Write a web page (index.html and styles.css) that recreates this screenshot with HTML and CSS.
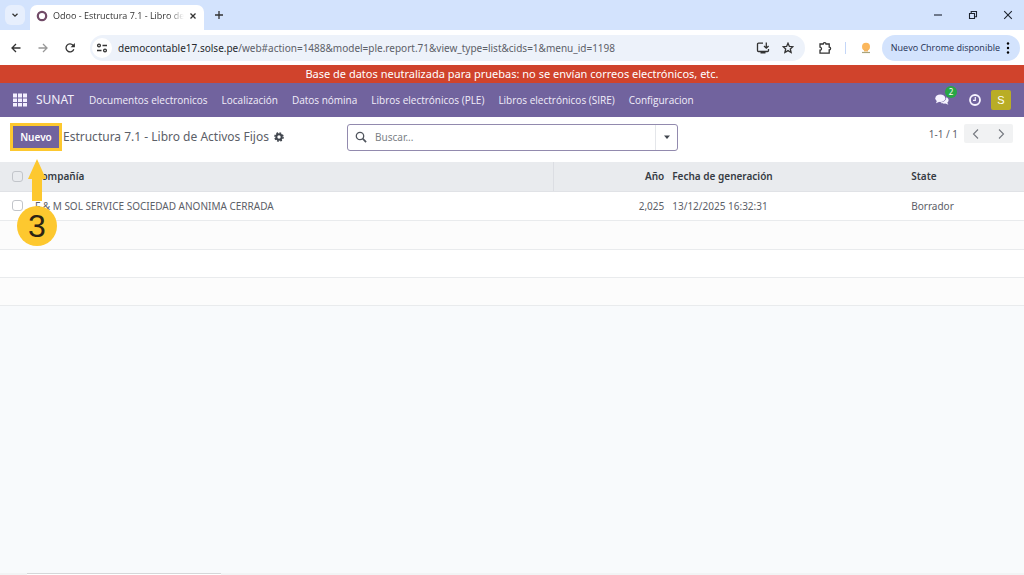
FILE: index.html
```html
<!DOCTYPE html>
<html lang="es">
<head>
<meta charset="utf-8">
<title>Odoo - Estructura 7.1 - Libro de Activos Fijos</title>
<link rel="stylesheet" href="styles.css">
</head>
<body>
<div class="tabstrip">
  <button class="tab-search" aria-label="Buscar pestañas"><svg width="8" height="8" viewBox="0 0 8 8"><path d="M1.5 2.7 4 5.2l2.5-2.5" class="line"/></svg></button>
  <div class="tab">
    <svg width="12" height="12" viewBox="0 0 12 12"><circle cx="6" cy="6" r="4.2" fill="none" stroke="#714b67" stroke-width="2.2"/></svg>
    <span class="tab-title">Odoo - Estructura 7.1 - Libro de</span>
    <button class="plain" aria-label="Cerrar pestaña"><svg width="8" height="8" viewBox="0 0 8 8"><path d="m1.5 1.5 5 5m0-5-5 5" class="line"/></svg></button>
  </div>
  <button class="plain new-tab" aria-label="Nueva pestaña"><svg width="10" height="10" viewBox="0 0 10 10"><path d="M5 1v8M1 5h8" class="line"/></svg></button>
  <div class="window-buttons">
    <button class="plain" aria-label="Minimizar"><svg width="10" height="10" viewBox="0 0 10 10"><path d="M1 5h8" class="thin"/></svg></button>
    <button class="plain" aria-label="Restaurar"><svg width="10" height="10" viewBox="0 0 10 10"><path d="M1.5 3.5h5v5h-5zM3.2 3.2V1.5h5.3v5.3H6.8" class="thin"/></svg></button>
    <button class="plain" aria-label="Cerrar"><svg width="10" height="10" viewBox="0 0 10 10"><path d="m1.2 1.2 7.6 7.6m0-7.6L1.2 8.8" class="thin"/></svg></button>
  </div>
</div>

<div class="toolbar">
  <div class="history">
    <button class="plain" aria-label="Atrás"><svg width="12" height="12" viewBox="0 0 12 12"><path d="M10.5 6H2m4-4L2 6l4 4" class="line"/></svg></button>
    <button class="plain faded" aria-label="Adelante"><svg width="12" height="12" viewBox="0 0 12 12"><path d="M1.500 6H10M6 2l4 4-4 4" class="line"/></svg></button>
    <button class="plain" aria-label="Recargar"><svg width="12" height="12" viewBox="0 0 12 12"><path d="M9.800 7.200A4 4 0 1 1 9 3.200l1.200 1.300" class="line"/><path d="M10.900 1v4.300H6.600z" fill="#333"/></svg></button>
  </div>
  <div class="address">
    <button class="site-info" aria-label="Información del sitio"><svg width="12" height="12" viewBox="0 0 12 12"><circle cx="3" cy="3.500" r="1.400" class="line"/><path d="M6.500 3.500H11M1 8.500h4.500" class="line"/><circle cx="9" cy="8.500" r="1.400" class="line"/></svg></button>
    <div class="url"><span class="host">democontable17.solse.pe</span>/web#action=1488&amp;model=ple.report.71&amp;view_type=list&amp;cids=1&amp;menu_id=1198</div>
    <button class="plain" aria-label="Instalar"><svg width="14" height="14" viewBox="0 0 14 14"><path d="M7 2.200H2.500a1 1 0 0 0-1 1v6.300a1 1 0 0 0 1 1h9a1 1 0 0 0 1-1V8M10.300 1.500V7M8 5l2.300 2.200L12.600 5" class="line"/><path d="M4.500 10.500h5v2h-5z" fill="#333"/></svg></button>
    <button class="plain" aria-label="Marcador"><svg width="12" height="12" viewBox="0 0 12 12"><path d="m6 1.200 1.400 3.200 3.500.3-2.600 2.300.8 3.500L6 8.600l-3.100 1.900.8-3.500L1.100 4.700l3.500-.3z" class="line"/></svg></button>
  </div>
  <button class="plain" aria-label="Extensiones"><svg width="14" height="14" viewBox="0 0 14 14"><path d="M2 3h3.200a1.400 1.400 0 0 1 2.800 0h3.200v3.200a1.400 1.400 0 0 1 0 2.800v3.200H2V9.200a1.500 1.500 0 0 0 0-3z" class="line"/></svg></button>
  <span class="divider"></span>
  <button class="plain" aria-label="Perfil"><svg width="12" height="12" viewBox="0 0 12 12"><circle cx="6" cy="4.700" r="4" fill="#fbb75c"/><path d="M4 7h4v2.500H4z" fill="#f3b562"/><path d="M2 10.500h8" stroke="#a9a47c" stroke-width="1.200"/></svg></button>
  <button class="update">Nuevo Chrome disponible<svg width="4" height="14" viewBox="0 0 4 14"><circle cx="2" cy="2.500" r="1.200"/><circle cx="2" cy="7" r="1.200"/><circle cx="2" cy="11.500" r="1.200"/></svg></button>
</div>

<div class="banner">Base de datos neutralizada para pruebas: no se envían correos electrónicos, etc.</div>

<nav class="navbar">
  <button class="plain" aria-label="Aplicaciones"><svg width="14" height="14" viewBox="0 0 14 14" fill="#f3efff"><path d="M0 0.500h4v4H0zM5 .5h4v4H5zM10 .5h4v4h-4zM0 5.500h4v3.600H0zM5 5.500h4v3.600H5zM10 5.500h4v3.600h-4zM0 10h4v3.600H0zM5 10h4v3.600H5zM10 10h4v3.600h-4z"/></svg></button>
  <a class="brand" href="#">SUNAT</a>
  <div class="menu">
    <a href="#">Documentos electronicos</a>
    <a href="#">Localización</a>
    <a href="#">Datos nómina</a>
    <a href="#">Libros electrónicos (PLE)</a>
    <a href="#">Libros electrónicos (SIRE)</a>
    <a href="#">Configuracion</a>
  </div>
  <div class="systray">
    <button class="plain messages" aria-label="Mensajes"><svg width="14" height="12" viewBox="0 0 14 12" fill="#f6f3ff"><ellipse cx="5.300" cy="4.300" rx="5" ry="3.800"/><path d="M2 6.500 1 9.300l4-1.800z"/><path d="M11.300 3.300c2.400 1.100 3.200 3.600 1 5.400l1.100 2-3-1.100c-2 .3-3.900-.1-4.900-1.100 3.500-.2 5.800-2.300 5.800-5.200z"/></svg><span class="badge">2</span></button>
    <button class="plain" aria-label="Actividades"><svg width="14" height="14" viewBox="0 0 14 14"><circle cx="7" cy="7" r="5" fill="none" stroke="#f6f3ff" stroke-width="1.800"/><path d="M7.300 4v3.300H5" fill="none" stroke="#f6f3ff" stroke-width="1.200"/></svg></button>
    <button class="avatar">S</button>
  </div>
</nav>

<main class="main">
  <div class="control-panel">
    <div class="crumbs">
      <button class="new">Nuevo</button>
      <h1>Estructura 7.1 - Libro de Activos Fijos</h1>
      <button class="plain" aria-label="Acciones"><svg width="10" height="10" viewBox="0 0 10 10"><circle cx="5" cy="5" r="2.700" fill="none" stroke="#3f444c" stroke-width="2"/><circle cx="5" cy="5" r="4.100" fill="none" stroke="#3f444c" stroke-width="1.400" stroke-dasharray="1.800 1.420"/></svg></button>
    </div>
    <div class="search">
      <svg width="12" height="12" viewBox="0 0 12 12"><circle cx="5" cy="5" r="3.700" fill="none" stroke="#50555d" stroke-width="1.300"/><path d="m7.700 7.700 3.400 3.400" stroke="#50555d" stroke-width="1.700"/></svg>
      <input type="text" placeholder="Buscar..." aria-label="Buscar">
      <button class="toggle" aria-label="Filtros"><svg width="8" height="5" viewBox="0 0 8 5"><path d="M1 .5h6L4 4z" fill="#41464e"/></svg></button>
    </div>
    <div class="pager">
      <span>1-1 / 1</span>
      <div class="pager-buttons">
        <button class="plain" aria-label="Anterior"><svg width="10" height="12" viewBox="0 0 10 12"><path d="M7 1.500 2.500 6 7 10.500"/></svg></button>
        <button class="plain" aria-label="Siguiente"><svg width="10" height="12" viewBox="0 0 10 12"><path d="M3 1.500 7.500 6 3 10.500"/></svg></button>
      </div>
    </div>
  </div>

  <table class="list">
    <colgroup><col class="c-check"><col class="c-company"><col class="c-year"><col class="c-date"><col class="c-state"></colgroup>
    <thead>
      <tr><th><input type="checkbox" aria-label="Seleccionar todo"></th><th>Compañía</th><th class="num">Año</th><th>Fecha de generación</th><th>State</th></tr>
    </thead>
    <tbody>
      <tr><td><input type="checkbox" aria-label="Seleccionar registro"></td><td>F &amp; M SOL SERVICE SOCIEDAD ANONIMA CERRADA</td><td class="num">2,025</td><td>13/12/2025 16:32:31</td><td>Borrador</td></tr>
      <tr><td colspan="5"></td></tr>
      <tr><td colspan="5"></td></tr>
      <tr><td colspan="5"></td></tr>
    </tbody>
  </table>

  <div class="callout">
    <svg width="18" height="42" viewBox="0 0 18 42"><path d="M9 0 18 20h-4v22H4V20H0z" fill="#fdc82f"/></svg>
    <span class="step">3</span>
  </div>
</main>
<div class="taskbar"><span class="task-search"></span></div>
</body>
</html>
```
FILE: styles.css
```css
* { box-sizing: border-box; }
body {
  margin: 0;
  min-height: 100vh;
  display: flex;
  flex-direction: column;
  background: #f8fafc;
  color: #5c6068;
  font: 11px/16px "Noto Sans", "Open Sans", sans-serif;
}
button, input { font: inherit; color: inherit; }
a { color: inherit; text-decoration: none; }
svg { display: block; flex: none; }
.plain { border: 0; padding: 0; background: none; display: flex; }
.line { fill: none; stroke: #333; stroke-width: 1.3; }
.thin { fill: none; stroke: #1d2430; stroke-width: 1.1; }
.faded { opacity: .5; }

.tabstrip {
  height: 30px;
  display: flex;
  align-items: center;
  padding: 0 11px 0 5px;
  background: #d3e3fd;
}
.tab-search {
  width: 20px;
  height: 20px;
  padding: 0;
  border: 0;
  border-radius: 6px;
  background: #e7effd;
  display: grid;
  place-items: center;
}
.tab {
  align-self: flex-end;
  width: 174px;
  height: 25px;
  margin-left: 5px;
  padding: 0 8px 4px 6px;
  display: flex;
  align-items: center;
  gap: 5px;
  border-radius: 7px 7px 0 0;
  background: #fff;
  color: #333;
}
.tab-title {
  flex: 1;
  white-space: nowrap;
  font-family: "Open Sans", sans-serif;
  font-size: 9px;
  -webkit-mask-image: linear-gradient(90deg, #000 88%, transparent);
  mask-image: linear-gradient(90deg, #000 88%, transparent);
}
.new-tab { margin-left: 10px; }
.window-buttons { margin-left: auto; display: flex; gap: 25px; }

.toolbar {
  height: 35px;
  display: flex;
  align-items: center;
  padding: 0 4px 0 10px;
  background: #fff;
}
.history { display: flex; gap: 15px; margin: 0 14px 0 0; }
.address {
  flex: 1;
  height: 26px;
  display: flex;
  align-items: center;
  gap: 12px;
  padding: 0 11px 0 2px;
  border-radius: 13px;
  background: #edf2fa;
  margin-right: 13px;
}
.site-info {
  width: 20px;
  height: 20px;
  padding: 0;
  border: 0;
  border-radius: 50%;
  background: #fff;
  display: grid;
  place-items: center;
}
.url { flex: 1; margin-left: -6px; white-space: nowrap; font-size: 10px; }
.host { color: #26292e; }
.divider { width: 1px; height: 12px; margin: 0 14px 0 13px; background: #c3d6f8; }
.update {
  height: 26px;
  margin-left: 10px;
  padding: 0 10px 0 9px;
  display: flex;
  align-items: center;
  gap: 6px;
  border: 0;
  border-radius: 13px;
  background: #d3e3fd;
  color: #1d2f52;
  font-family: "Open Sans", sans-serif;
  font-size: 9px;
  white-space: nowrap;
}

.banner { background: #d0432c; color: #fff; text-align: center; line-height: 18px; }

.navbar {
  height: 34px;
  display: flex;
  align-items: center;
  padding: 0 13px;
  background: #71639e;
  color: #f1eefa;
  white-space: nowrap;
}
.brand { margin: 0 15px 0 9px; font-size: 12px; }
.menu { display: flex; gap: 14px; font-family: "Open Sans", sans-serif; font-size: 10px; }
.systray { margin-left: auto; display: flex; align-items: center; gap: 9px; }
.messages { position: relative; margin-right: 10px; }
.badge {
  position: absolute;
  left: 10px;
  top: -8px;
  width: 12px;
  height: 12px;
  border-radius: 6px;
  background: #28a745;
  color: #fff;
  font-size: 8px;
  line-height: 12px;
}
.avatar {
  width: 20px;
  height: 20px;
  padding: 0;
  border: 0;
  border-radius: 2px;
  background: #b9ad26;
  color: #fff;
  font-family: "Liberation Sans", sans-serif;
}

.main { flex: 1; position: relative; }
.control-panel {
  height: 45px;
  display: grid;
  grid-template-columns: 337fr 331fr 335fr;
  align-items: center;
  padding: 0 11px 5px 10px;
  background: #fff;
}
.crumbs { display: flex; align-items: center; gap: 5px; white-space: nowrap; }
.new {
  height: 28px;
  width: 52px;
  padding: 0;
  border: 3px solid #fdc82f;
  background: #71639e;
  color: #fff;
  font-size: 10px;
  font-weight: 600;
}
h1 { margin: 0 0 0 -4px; font-size: 12px; font-weight: 400; }
.search {
  height: 27px;
  display: flex;
  align-items: center;
  padding-left: 7px;
  border: 1px solid #928aae;
  border-radius: 3px;
}
.search input {
  flex: 1;
  min-width: 0;
  border: 0;
  outline: 0;
  padding: 0 8px;
  background: none;
  font-size: 10px;
}
.search input::placeholder { color: #7b7f86; opacity: 1; }
.toggle {
  width: 22px;
  height: 25px;
  padding: 0;
  border: 0;
  border-left: 1px solid #e4e6ea;
  background: none;
  display: grid;
  place-items: center;
}
.pager { display: flex; align-items: center; justify-content: flex-end; gap: 6px; padding-bottom: 7px; font-size: 10px; }
.pager-buttons {
  width: 49px;
  height: 19px;
  display: flex;
  align-items: center;
  justify-content: space-around;
  border-radius: 2px;
  background: #f1f2f3;
}
.pager-buttons path { fill: none; stroke: #74787f; stroke-width: 1.1; }

.list { width: 100%; table-layout: fixed; border-collapse: collapse; background: #fff; font-size: 10px; }
.c-check { width: 31px; }
.c-company { width: 51%; }
.c-year { width: 115px; }
.c-date { width: 239px; }
.list th, .list td { height: 28px; padding: 0 4px; text-align: left; white-space: nowrap; }
.list th { background: #e9ebee; color: #363b43; font-weight: 600; height: 29px; border-bottom: 1px solid #e0e2e6; }
.list th:nth-child(2) { border-right: 1px solid #dcdee3; }
.list td { border-bottom: 1px solid #e9ebed; }
.list tbody tr:first-child td { height: 29px; }
.list tbody tr:nth-child(2) td { height: 29px; }
.list tbody tr:nth-child(even) { background: #fcfcfc; }
.list .num { text-align: right; }
.list th:first-child, .list tbody tr:first-child td:first-child { padding-left: 12px; }
.list input {
  appearance: none;
  display: block;
  width: 11px;
  height: 11px;
  margin: 0;
  border: 1px solid #c2c5ca;
  border-radius: 3px;
  background: transparent;
}

.callout {
  position: absolute;
  left: 17px;
  top: 42px;
  display: flex;
  flex-direction: column;
  align-items: center;
}
.step {
  width: 40px;
  height: 40px;
  margin-top: 5px;
  border-radius: 50%;
  background: #fdc82f;
  color: #2c2414;
  text-align: center;
  font: 32px/40px "Liberation Sans", sans-serif;
}
.taskbar { height: 2px; padding-left: 27px; background: #f2f4f5; }
.task-search { display: block; width: 194px; height: 2px; border-top: 1px solid #d5d7d9; background: #fff; }
```
